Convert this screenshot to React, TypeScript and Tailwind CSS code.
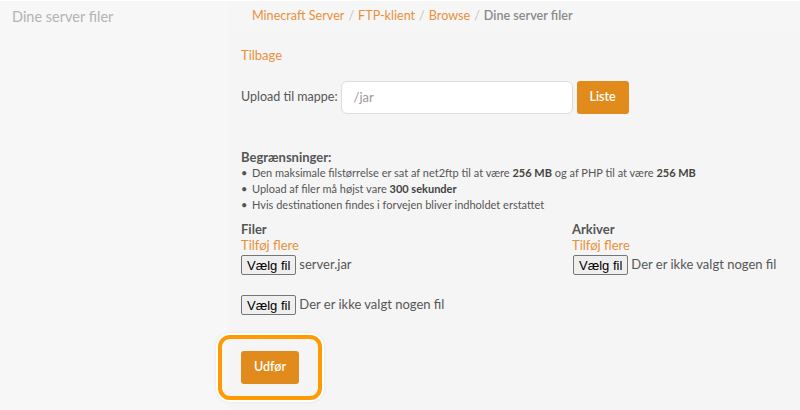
import React from 'react';

const lato = { fontFamily: 'Lato, "Noto Sans", sans-serif' };

function FileInput({ name }: { name?: string }) {
    return (
        <div className="flex items-center gap-[3px] h-[20px]">
            <span
                className="inline-flex items-center h-[20px] px-[5px] border border-[#767676] rounded-[2px] bg-[#efefef] text-[13px] text-black leading-none"
                style={{ fontFamily: '"Liberation Sans", Arial, sans-serif' }}
            >
                Vælg fil
            </span>
            <span className="text-[13px] text-[#555]">{name ?? 'Der er ikke valgt nogen fil'}</span>
        </div>
    );
}

export default function App() {
    return (
        <div className="w-[800px] h-[410px] flex bg-[#f5f5f5] overflow-hidden border-t border-white" style={lato}>
            {/* Sidebar */}
            <aside className="w-[228px] shrink-0 bg-[#f7f7f7]">
                <div className="pl-[12px] pt-[5px] text-[14.5px] text-[#b3b3b3]">Dine server filer</div>
            </aside>

            {/* Main */}
            <main className="flex-1 flex flex-col">
                <div className="h-[30px] bg-[#f6f6f6] pl-[24px] pt-[6px] text-[12.6px] text-[#e8913a] flex gap-[4px]">
                    <span>Minecraft Server</span>
                    <span className="text-[#c4c4c4]">/</span>
                    <span>FTP-klient</span>
                    <span className="text-[#c4c4c4]">/</span>
                    <span>Browse</span>
                    <span className="text-[#c4c4c4]">/</span>
                    <span className="text-[#8a8a8a] font-semibold">Dine server filer</span>
                </div>

                <div className="pl-[13px] pt-[15px] flex flex-col">
                    <a className="text-[13px] text-[#e8913a] leading-[18px]">Tilbage</a>

                    <div className="mt-[17px] flex items-center">
                        <span className="text-[12.5px] text-[#555] mr-[3px]">Upload til mappe:</span>
                        <div className="w-[232px] h-[33px] bg-white border border-[#dcdcdc] rounded-[6px] flex items-center pl-[12px] text-[13px] text-[#999]">
                            /jar
                        </div>
                        <button className="ml-[4px] w-[52px] h-[33px] bg-[#e08b1c] rounded-[3px] text-white text-[12.5px] font-semibold">
                            Liste
                        </button>
                    </div>

                    <div className="mt-[35px] text-[13px] font-bold text-[#555] leading-[16px]">Begrænsninger:</div>
                    <ul className="text-[11px] text-[#555] leading-[16px]">
                        <li className="flex gap-[6px]"><span className="w-[5px]">•</span><span>Den maksimale filstørrelse er sat af net2ftp til at være <b className="text-[#444]">256 MB</b> og af PHP til at være <b className="text-[#444]">256 MB</b></span></li>
                        <li className="flex gap-[6px]"><span className="w-[5px]">•</span><span>Upload af filer må højst vare <b className="text-[#444]">300 sekunder</b></span></li>
                        <li className="flex gap-[6px]"><span className="w-[5px]">•</span><span>Hvis destinationen findes i forvejen bliver indholdet erstattet</span></li>
                    </ul>

                    <div className="mt-[8px] grid grid-cols-[331px_1fr]">
                        <div className="flex flex-col">
                            <span className="text-[13px] font-bold text-[#555] leading-[16px]">Filer</span>
                            <span className="text-[13px] text-[#e8913a] leading-[17px]">Tilføj flere</span>
                            <div className="mt-[1px]"><FileInput name="server.jar" /></div>
                            <div className="mt-[20px]"><FileInput /></div>
                        </div>
                        <div className="flex flex-col">
                            <span className="text-[13px] font-bold text-[#555] leading-[16px]">Arkiver</span>
                            <span className="text-[13px] text-[#e8913a] leading-[17px]">Tilføj flere</span>
                            <div className="mt-[1px] ml-[1px]"><FileInput /></div>
                        </div>
                    </div>

                    <div className="mt-[20px] -ml-[23px] w-[104px] h-[65px] rounded-[12px] border-[4px] border-[#ff9a00] ring-2 ring-white shadow-[0_0_4px_rgba(0,0,0,0.25)] flex items-center justify-center">
                        <button className="w-[58px] h-[33px] bg-[#e08b1c] rounded-[3px] text-white text-[12.5px] font-semibold">
                            Udfør
                        </button>
                    </div>
                </div>
            </main>
        </div>
    );
}
